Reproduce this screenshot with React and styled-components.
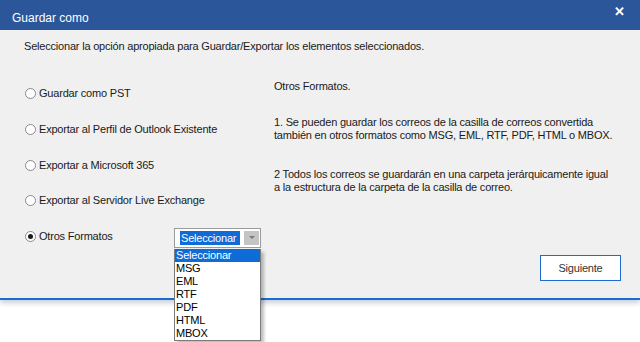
import React from 'react';
import styled, { createGlobalStyle } from 'styled-components';

const GlobalStyle = createGlobalStyle`
  html, body {
    margin: 0;
    padding: 0;
    background: #ffffff;
    width: 640px;
    height: 342px;
    overflow: hidden;
  }
  body {
    font-family: 'Liberation Sans', Arial, sans-serif;
  }
`;

const Dialog = styled.div`
  width: 640px;
  height: 300px;
  background: #f0f0f0;
  border-bottom: 2px solid #1d6ad0;
  box-shadow: 0 3px 5px rgba(0, 40, 90, 0.22);
  display: flex;
  flex-direction: column;
  box-sizing: border-box;
`;

const TitleBar = styled.div`
  height: 30px;
  flex-shrink: 0;
  background: #2b579a;
  color: #ffffff;
  display: flex;
  align-items: center;
  padding: 5px 14px 0 12px;
  box-sizing: border-box;
  font-size: 12px;
  position: relative;
`;

const CloseBtn = styled.span`
  position: absolute;
  top: 4px;
  right: 15px;
  font-size: 13px;
  font-weight: bold;
`;

const Body = styled.div`
  flex: 1;
  display: flex;
  flex-direction: column;
  padding: 10px 0 0 24px;
  color: #1a1a1a;
  font-size: 11px;
  line-height: 13px;
  letter-spacing: -0.2px;
  position: relative;
`;

const Intro = styled.div`
  margin-bottom: 27px;
`;

const Columns = styled.div`
  display: grid;
  grid-template-columns: 250px 1fr;
  align-items: start;
`;

const OptionList = styled.div`
  display: flex;
  flex-direction: column;
  gap: 22.75px;
  padding: 7px 0 0 1px;
`;

const OptionRow = styled.label`
  display: flex;
  align-items: center;
  height: 13px;
`;

const Radio = styled.span`
  width: 11px;
  height: 11px;
  margin-right: 3px;
  border-radius: 50%;
  border: 1px solid #8a8a8a;
  background: #ffffff;
  box-sizing: border-box;
  display: flex;
  align-items: center;
  justify-content: center;
  &::after {
    content: '';
    width: 5px;
    height: 5px;
    border-radius: 50%;
    background: ${({ $checked }) => ($checked ? '#1a1a1a' : 'transparent')};
  }
`;

const OptionText = styled.span`
  width: 135px;
`;

const Combo = styled.div`
  position: relative;
  width: 87px;
  height: 20px;
  margin-top: 2px;
  border: 1px solid #9a9a9a;
  background: #ffffff;
  box-sizing: border-box;
  display: flex;
  align-items: center;
  padding-left: 5px;
`;

const ComboValue = styled.span`
  background: #0f6bd6;
  color: #ffffff;
  width: 60px;
  height: 14px;
  line-height: 14px;
  padding-left: 1px;
  box-sizing: border-box;
`;

const ComboArrow = styled.span`
  position: absolute;
  right: 1px;
  top: 2px;
  bottom: 2px;
  width: 15px;
  background: #c4c4c4;
  display: flex;
  align-items: center;
  justify-content: center;
  &::after {
    content: '';
    border-left: 3px solid transparent;
    border-right: 3px solid transparent;
    border-top: 3px solid #7a7a7a;
  }
`;

const DropList = styled.ul`
  position: absolute;
  top: 20px;
  left: -1px;
  width: 87px;
  margin: 0;
  padding: 0;
  list-style: none;
  background: #ffffff;
  border: 1px solid #7a7a7a;
  border-top: none;
  box-sizing: border-box;
  box-shadow: 3px 3px 3px rgba(0, 0, 0, 0.25);
  z-index: 5;
`;

const DropItem = styled.li`
  height: 13px;
  line-height: 13px;
  padding-left: 1px;
  color: ${({ $active }) => ($active ? '#ffffff' : '#000000')};
  background: ${({ $active }) => ($active ? '#0f6bd6' : 'transparent')};
`;

const InfoCol = styled.div`
  display: flex;
  flex-direction: column;
`;

const InfoPara = styled.div`
  margin-top: ${({ $gap }) => $gap || 0}px;
`;

const Footer = styled.div`
  display: flex;
  justify-content: flex-end;
  padding-right: 19px;
  margin-top: 12px;
`;

const Button = styled.button`
  width: 81px;
  height: 26px;
  background: #ffffff;
  border: 1px solid #1d6ad0;
  font-family: 'Liberation Sans', Arial, sans-serif;
  font-size: 11px;
  letter-spacing: -0.2px;
  color: #333;
  padding: 0;
`;

const options = [
  'Guardar como PST',
  'Exportar al Perfil de Outlook Existente',
  'Exportar a Microsoft 365',
  'Exportar al Servidor Live Exchange',
];

const formats = ['Seleccionar', 'MSG', 'EML', 'RTF', 'PDF', 'HTML', 'MBOX'];

export default function App() {
  return (
    <>
      <GlobalStyle />
      <Dialog>
        <TitleBar>
          <span>Guardar como</span>
          <CloseBtn>✕</CloseBtn>
        </TitleBar>
        <Body>
          <Intro>Seleccionar la opción apropiada para Guardar/Exportar los elementos seleccionados.</Intro>
          <Columns>
            <OptionList>
              {options.map((o) => (
                <OptionRow key={o}>
                  <Radio />
                  <span>{o}</span>
                </OptionRow>
              ))}
              <OptionRow>
                <Radio $checked />
                <OptionText>Otros Formatos</OptionText>
                <Combo>
                  <ComboValue>Seleccionar</ComboValue>
                  <ComboArrow />
                  <DropList>
                    {formats.map((f, i) => (
                      <DropItem key={f} $active={i === 0}>{f}</DropItem>
                    ))}
                  </DropList>
                </Combo>
              </OptionRow>
            </OptionList>
            <InfoCol>
              <InfoPara>Otros Formatos.</InfoPara>
              <InfoPara $gap={23}>
                1. Se pueden guardar los correos de la casilla de correos convertida<br />
                también en otros formatos como MSG, EML, RTF, PDF, HTML o MBOX.
              </InfoPara>
              <InfoPara $gap={26}>
                2 Todos los correos se guardarán en una carpeta jerárquicamente igual<br />
                a la estructura de la carpeta de la casilla de correo.
              </InfoPara>
            </InfoCol>
          </Columns>
          <Footer>
            <Button>Siguiente</Button>
          </Footer>
        </Body>
      </Dialog>
    </>
  );
}
